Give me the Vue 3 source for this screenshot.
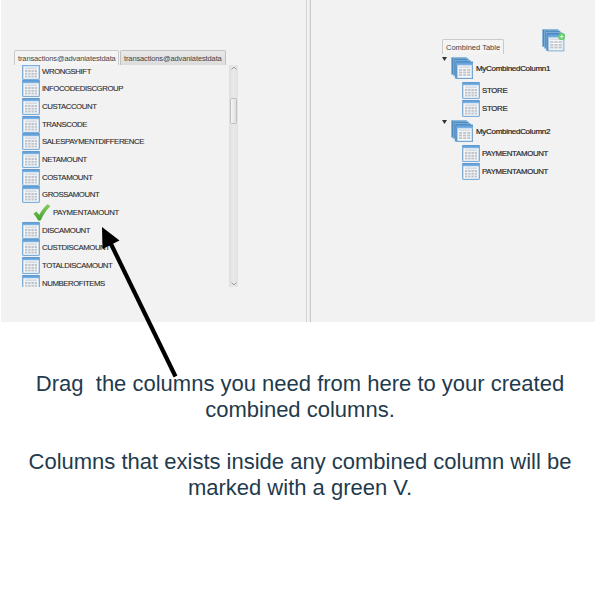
<script setup>
const columns = [
  'WRONGSHIFT', 'INFOCODEDISCGROUP', 'CUSTACCOUNT', 'TRANSCODE',
  'SALESPAYMENTDIFFERENCE', 'NETAMOUNT', 'COSTAMOUNT', 'GROSSAMOUNT',
  'PAYMENTAMOUNT', 'DISCAMOUNT', 'CUSTDISCAMOUNT', 'TOTALDISCAMOUNT', 'NUMBEROFITEMS',
].map((name) => ({ name, used: name === 'PAYMENTAMOUNT' }))

const groups = [
  { name: 'MyCombinedColumn1', items: ['STORE', 'STORE'] },
  { name: 'MyCombinedColumn2', items: ['PAYMENTAMOUNT', 'PAYMENTAMOUNT'] },
]
</script>

<template>
  <svg class="defs" width="0" height="0">
    <defs>
      <linearGradient id="head" x1="0" y1="0" x2="0" y2="1">
        <stop offset="0" stop-color="#4f92d0" /><stop offset="1" stop-color="#86b8e5" />
      </linearGradient>
      <linearGradient id="tick" x1="0" y1="0" x2="0" y2="1">
        <stop offset="0" stop-color="#8ccf68" /><stop offset="1" stop-color="#3f9f2c" />
      </linearGradient>
      <symbol id="table" viewBox="0 0 18 17">
        <rect x=".5" y=".5" width="17" height="16" rx=".6" fill="#c9dff1" stroke="#7fadd3" />
        <rect x=".2" y=".2" width="17.6" height="3" rx=".6" fill="url(#head)" />
        <rect x="2" y="3.5" width="14" height="12" fill="#f6f8fa" />
        <path fill="#d6d9de" d="M3 4.4h12v1.8H3z" />
        <path fill="#bfc3ca" d="M3 7h2.4v2H3zM6.2 7h2.4v2H6.2zM9.4 7h2.4v2H9.4zM12.6 7H15v2h-2.4zM3 9.7h2.4v2H3zM6.2 9.7h2.4v2H6.2zM9.4 9.7h2.4v2H9.4zM12.6 9.7H15v2h-2.4zM3 12.4h2.4v2H3zM6.2 12.4h2.4v2H6.2zM9.4 12.4h2.4v2H9.4zM12.6 12.4H15v2h-2.4z" />
      </symbol>
      <symbol id="stack" viewBox="0 0 22 22">
        <g stroke="#9cc5e6" stroke-width=".6" fill="#4584bb">
          <rect x=".3" y=".3" width="15.5" height="17" />
          <rect x="2.2" y="1.8" width="15.5" height="17" />
          <rect x="4" y="3.3" width="15.5" height="18" />
        </g>
        <rect x="5.8" y="5" width="15.8" height="16.6" fill="#c9dff1" stroke="#5f98c8" stroke-width=".8" />
        <rect x="5.6" y="4.8" width="16.2" height="3.6" fill="url(#head)" />
        <rect x="7.3" y="8.6" width="12.8" height="11.7" fill="#fafbfc" />
        <path d="M8 9.4h11.4v1.7H8z" fill="#d6d9de" />
        <path fill="#bfc3ca" d="M8 12h3.2v1.8H8zM12.1 12h3.2v1.8h-3.2zM16.2 12h3.2v1.8h-3.2zM8 14.6h3.2v1.8H8zM12.1 14.6h3.2v1.8h-3.2zM16.2 14.6h3.2v1.8h-3.2zM8 17.2h3.2V19H8zM12.1 17.2h3.2V19h-3.2zM16.2 17.2h3.2V19h-3.2z" />
      </symbol>
    </defs>
  </svg>

  <main class="page">
    <section class="panes">
      <div class="source">
        <nav class="tabs">
          <span class="tab active">transactions@advaniatestdata</span>
          <span class="tab">transactions@advaniatestdata</span>
        </nav>
        <div class="browser">
          <ul class="list">
            <li v-for="c in columns" :key="c.name" class="row" :class="{ used: c.used }">
              <svg v-if="c.used" class="icon" viewBox="0 0 18 17">
                <path d="M.4 9.7 3.4 7.4 6.3 10.8C8.5 6.4 11.6 2.6 14.8.1L17.4 2.2C13.3 6 10.1 11 7.8 16.2L5.4 16.7Q3.4 12.8.4 9.7Z" fill="url(#tick)" />
              </svg>
              <svg v-else class="icon"><use href="#table" /></svg>
              <span class="name">{{ c.name }}</span>
            </li>
          </ul>
          <div class="scroll">
            <svg class="chev" viewBox="0 0 6 4"><path d="M.5 3.5 3 1 5.5 3.5" /></svg>
            <i class="thumb"></i>
            <svg class="chev down" viewBox="0 0 6 4"><path d="M.5.5 3 3 5.5.5" /></svg>
          </div>
        </div>
      </div>
      <div class="divider"></div>
      <div class="target">
        <div class="top">
          <span class="tab active combined">Combined Table</span>
          <svg class="add" viewBox="0 0 23 23">
            <use href="#stack" width="22.5" height="22.5" />
            <circle cx="19.7" cy="7.6" r="3.5" fill="#5fcb62" />
            <path d="M19.7 5.6v4M17.7 7.6h4" stroke="#d5f7d5" stroke-width="1.1" />
          </svg>
        </div>
        <div v-for="g in groups" :key="g.name" class="group">
          <div class="group-head">
            <svg class="caret" viewBox="0 0 5 4"><path d="M0 0h5L2.5 4z" /></svg>
            <svg class="stack"><use href="#stack" /></svg>
            <span class="group-name">{{ g.name }}</span>
          </div>
          <div v-for="(item, i) in g.items" :key="i" class="row">
            <svg class="icon"><use href="#table" /></svg>
            <span class="name">{{ item }}</span>
          </div>
        </div>
      </div>
    </section>

    <section class="caption">
      <p>Drag&nbsp; the columns you need from here to your created<br />combined columns.</p>
      <p>Columns that exists inside any combined column will be<br />marked with a green V.</p>
    </section>

    <svg class="arrow" viewBox="0 0 600 600">
      <path d="M111 244 175.5 376.5" stroke="#000" stroke-width="4.2" />
      <path d="M102 227 119.5 240.5 102.5 249z" />
    </svg>
  </main>
</template>

<style>
body { margin: 0; background: #fff; }
</style>

<style scoped>
.defs { position: absolute; }
.page {
  position: relative;
  width: 600px;
  height: 600px;
  overflow: hidden;
  font-family: "Liberation Sans", Arial, sans-serif;
}
.panes {
  display: flex;
  box-sizing: border-box;
  width: 594px;
  height: 322px;
  margin-left: 1px;
  background: #f2f2f2;
}
.source { width: 305px; padding: 50px 0 0 13px; box-sizing: border-box; }
.tabs { display: flex; gap: 1px; height: 15px; }
.tab {
  box-sizing: border-box;
  width: 106px;
  height: 14.5px;
  padding-left: 3px;
  border: 1px solid #c2c2c2;
  border-bottom: 0;
  border-radius: 2px 2px 0 0;
  background: linear-gradient(#e9e9e9, #dcdcdc);
  color: #444;
  font-size: 7.5px;
  line-height: 15px;
  letter-spacing: -0.12px;
  white-space: nowrap;
}
.tab.active { width: 105px; background: #f4f4f4; border-color: #cacaca; height: 15px; }
.browser { display: flex; justify-content: space-between; width: 224px; height: 221.5px; }
.list { flex: 1; margin: 0; padding: 0 0 0 8px; overflow: hidden; list-style: none; }
.list .row:first-child { margin-top: -2.8px; }
.row { display: flex; align-items: center; gap: 2px; height: 17.7px; color: #2a2a2a; }
.row.used { padding-left: 11px; }
.icon { width: 18px; height: 17px; flex: none; }
.name {
  font-size: 7.8px;
  line-height: 17px;
  letter-spacing: -0.43px;
  white-space: nowrap;
  -webkit-text-stroke: 0.1px #2a2a2a;
}
.used .name { letter-spacing: -0.28px; }
.scroll {
  display: flex;
  flex-direction: column;
  align-items: center;
  box-sizing: border-box;
  width: 9px;
  padding: 1px 0;
  background: linear-gradient(90deg, #dfdfdf, #e9e9e9 50%, #e2e2e2);
}
.chev { width: 6px; height: 4px; fill: none; stroke: #999; stroke-width: 1; }
.chev.down { margin-top: auto; }
.thumb {
  box-sizing: border-box;
  width: 7px;
  height: 26px;
  margin-top: 28px;
  border: 1px solid #c0c0c0;
  border-radius: 1.5px;
  background: linear-gradient(90deg, #f6f6f6, #dedede);
}
.divider {
  box-sizing: border-box;
  width: 5px;
  border-left: 1px solid #d2d2d2;
  border-right: 1px solid #cacaca;
  background: linear-gradient(90deg, #f7f7f7, #e6e6e6);
}
.target { padding: 29px 0 0 131px; }
.top { display: flex; align-items: flex-start; gap: 38px; height: 28px; }
.tab.combined { width: 62px; margin-top: 10px; letter-spacing: 0; }
.add { width: 23px; height: 23px; }
.group { padding-bottom: 2.9px; }
.group .row { padding-left: 20px; }
.group .name { letter-spacing: -0.28px; -webkit-text-stroke: 0.2px #2a2a2a; }
.group-head { display: flex; align-items: flex-start; height: 24.7px; }
.caret { width: 5px; height: 4px; margin-right: 4px; fill: #333; }
.stack { width: 22px; height: 22px; margin-right: 3px; }
.group-name {
  font-size: 8px;
  line-height: 23px;
  letter-spacing: -0.3px;
  color: #222;
  -webkit-text-stroke: 0.2px #222;
}
.caption { padding-top: 49px; text-align: center; color: #1f3b4d; font-size: 22px; line-height: 26px; }
.caption p { margin: 0 0 26px; white-space: nowrap; }
.arrow { position: absolute; left: 0; top: 0; width: 600px; height: 600px; }
</style>
